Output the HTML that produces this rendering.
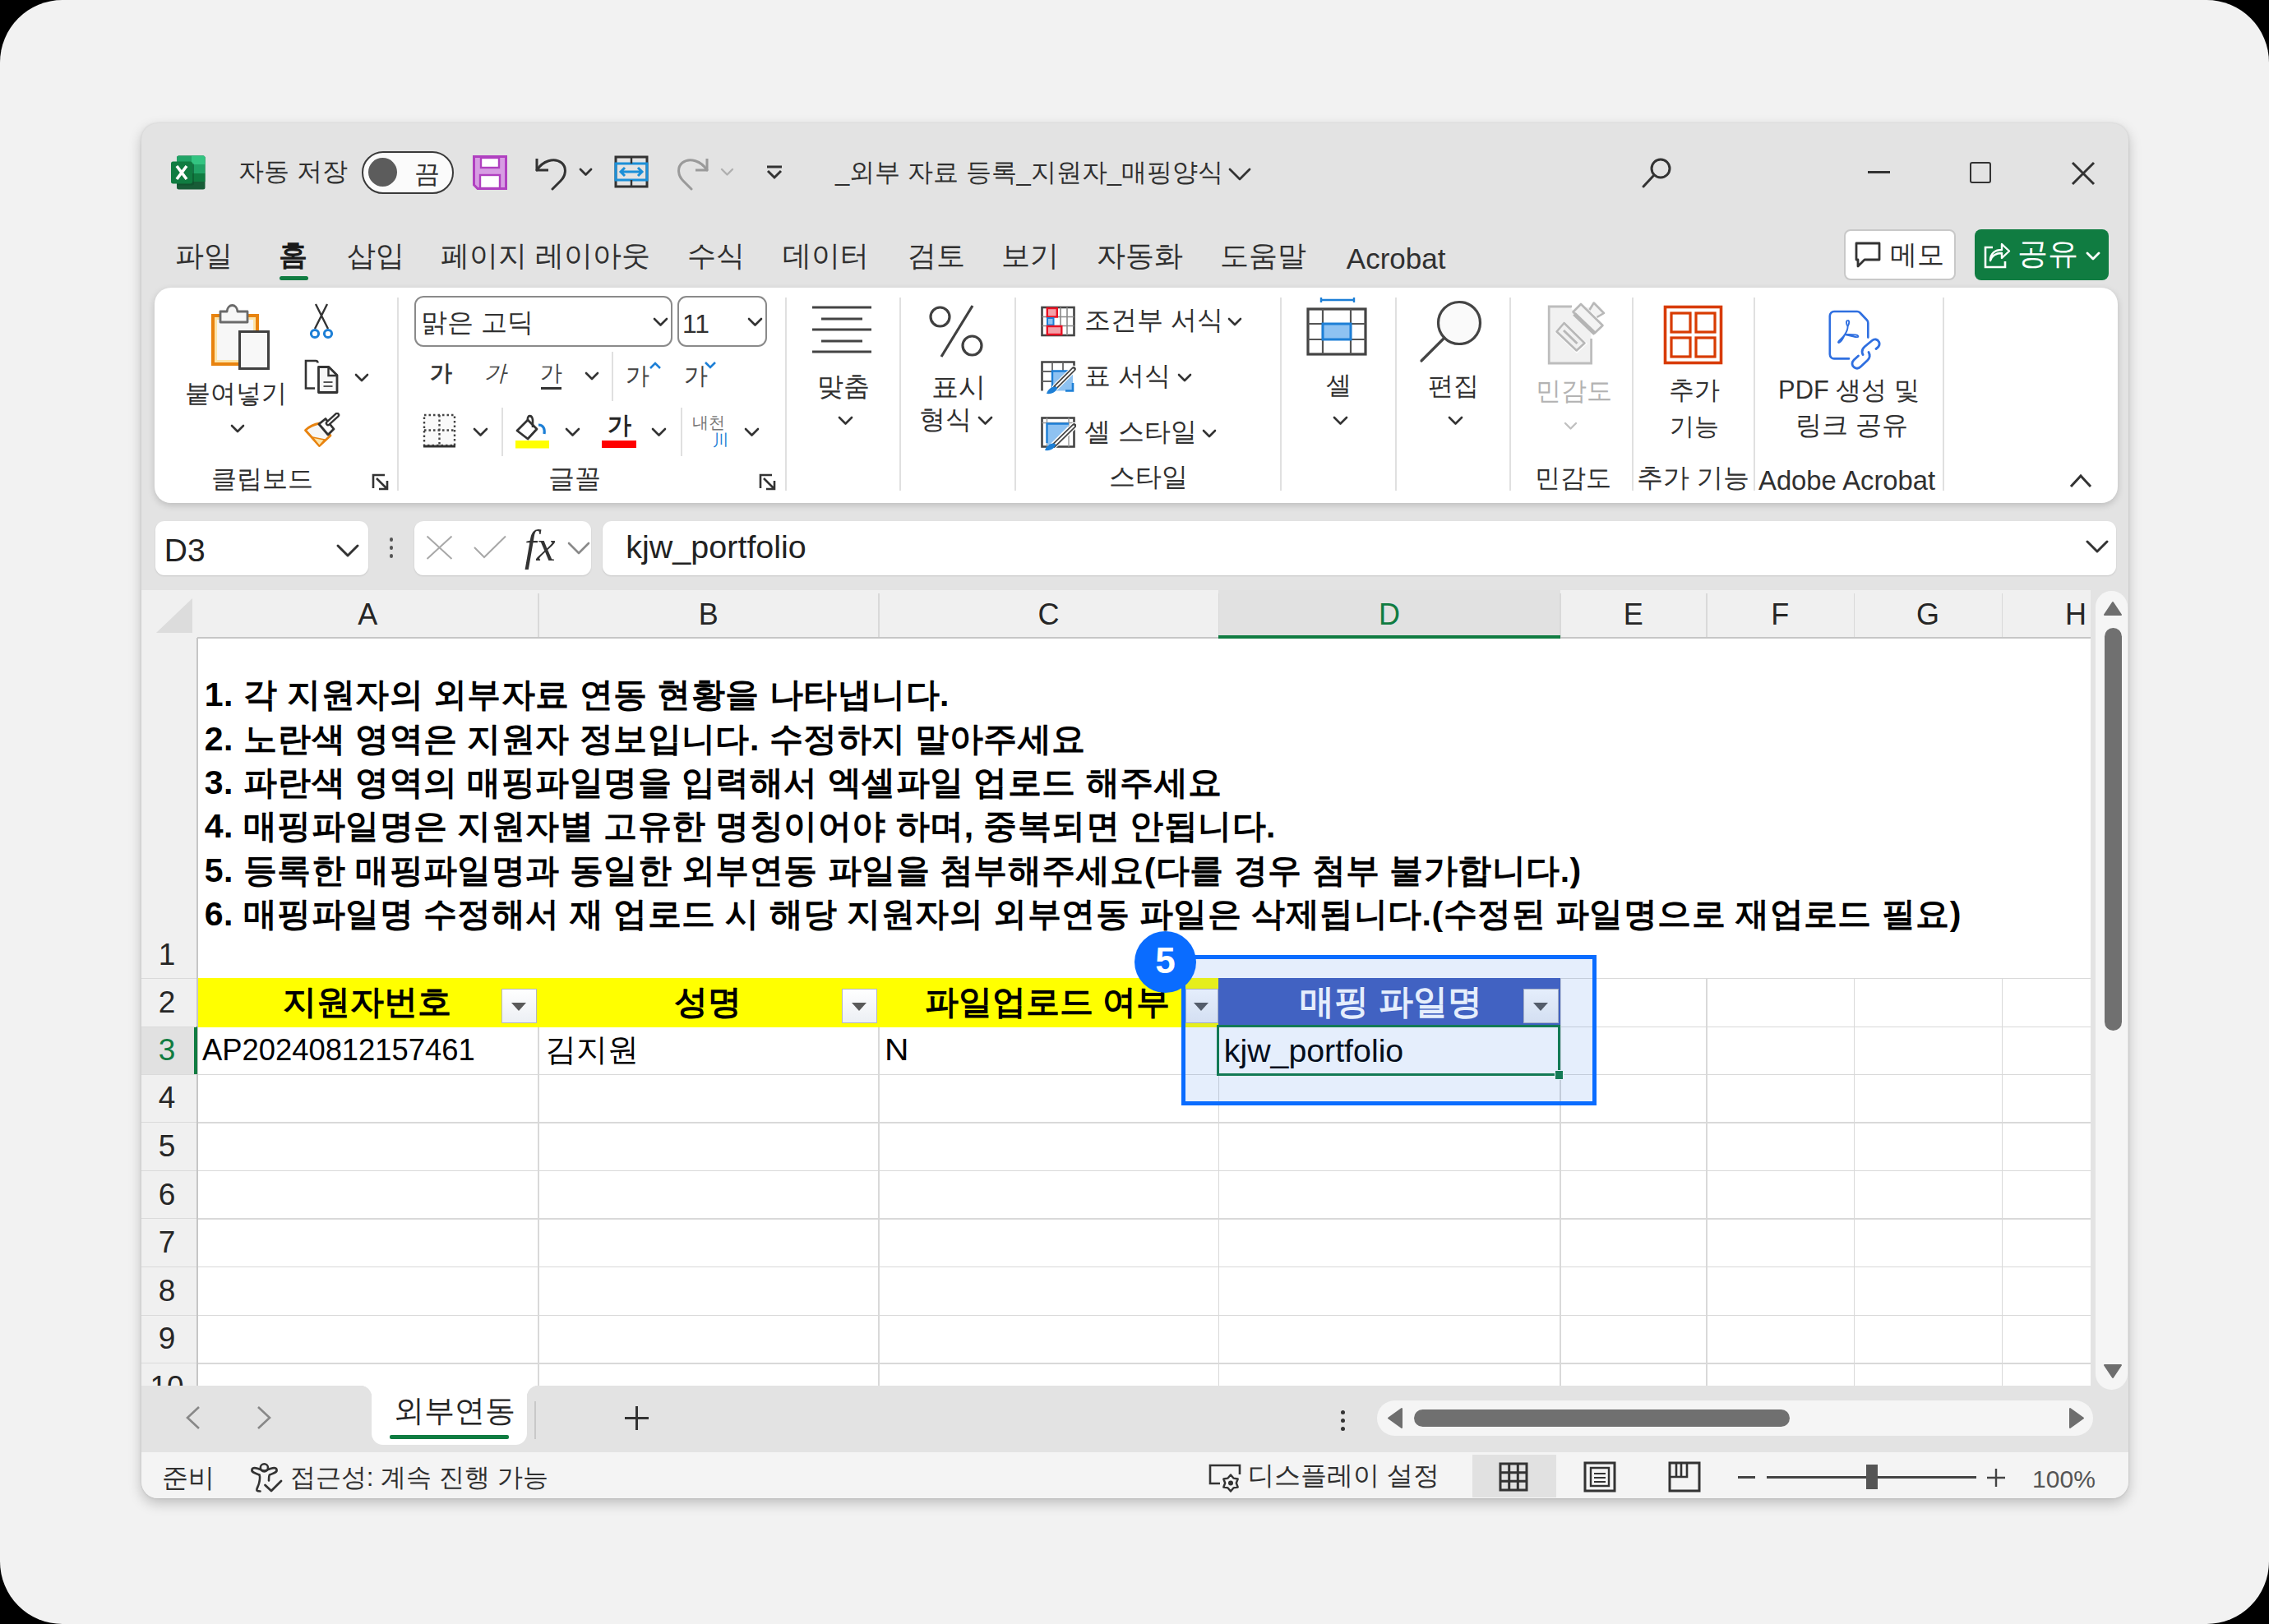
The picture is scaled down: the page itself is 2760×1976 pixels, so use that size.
<!DOCTYPE html>
<html><head><meta charset="utf-8"><style>
html,body{margin:0;padding:0;width:2760px;height:1976px;overflow:hidden;background:#000;}
#page{position:absolute;left:0;top:0;width:2760px;height:1976px;background:#f2f2f2;border-radius:76px;overflow:hidden;font-family:"Liberation Sans",sans-serif;}
.t{position:absolute;line-height:1;white-space:nowrap;font-family:"Liberation Sans",sans-serif;}
</style></head><body><div id="page">

<div style="position:absolute;left:172px;top:150px;width:2417px;height:1673px;background:#e3e3e3;border-radius:20px;box-shadow:0 6px 16px rgba(0,0,0,0.22),0 0 3px rgba(0,0,0,0.12);"></div>
<svg style="position:absolute;left:206px;top:188px" width="46" height="45" viewBox="0 0 46 45" fill="none">
<rect x="9" y="1.5" width="34.5" height="41" rx="2.5" fill="#185c37"/>
<path d="M11.5 1.5 H41 A2.5 2.5 0 0 1 43.5 4 V12.5 H9 V4 A2.5 2.5 0 0 1 11.5 1.5 Z" fill="#21a366"/>
<path d="M27 1.5 H41 A2.5 2.5 0 0 1 43.5 4 V12.5 H27 Z" fill="#33c481"/>
<rect x="9" y="12.5" width="34.5" height="10.5" fill="#21a366"/>
<rect x="9" y="23" width="34.5" height="10" fill="#107c41"/>
<rect x="9" y="10.5" width="21" height="27" rx="2.5" fill="#0b4f2a" opacity="0.55"/>
<rect x="2" y="8.5" width="26" height="27" rx="2.5" fill="#107c41"/>
<path d="M9 14 L21 30 M21 14 L9 30" stroke="#fff" stroke-width="3.6"/>
</svg>
<div class="t" style="left:290.1px;top:192.9px;font-size:31px;font-weight:normal;color:#303030;">자동 저장</div>
<div style="position:absolute;left:440px;top:184px;width:108px;height:48px;border:2px solid #3a3a3a;border-radius:26px;background:#fbfbfb;"></div>
<div style="position:absolute;left:448px;top:191.5px;width:35px;height:35px;border-radius:50%;background:#5c5c5c;"></div>
<div class="t" style="left:504.1px;top:195.9px;font-size:31px;font-weight:normal;color:#303030;">끔</div>
<svg style="position:absolute;left:575px;top:189px" width="42" height="42" viewBox="0 0 42 42" fill="none">
<path d="M1.5 1.5 H40.5 V40.5 H6 L1.5 36 Z" fill="#d79de3" stroke="#b040c0" stroke-width="3"/>
<rect x="10" y="3" width="22" height="12" fill="#fff" stroke="#b040c0" stroke-width="2.4"/>
<rect x="9" y="24" width="24" height="16" fill="#fff" stroke="#b040c0" stroke-width="2.4"/>
</svg>
<svg style="position:absolute;left:648px;top:188px" width="46" height="44" viewBox="0 0 46 44" fill="none">
<path d="M5 5 V19 H19" stroke="#333" stroke-width="3" fill="none" stroke-linejoin="round"/>
<path d="M5 19 C12 8 26 3 35 10 C42 16 40 26 34 32 L24 42" stroke="#333" stroke-width="3" fill="none" stroke-linecap="round"/>
</svg>
<svg style="position:absolute;left:702.5px;top:202.75px" width="19" height="12.5" viewBox="0 0 19 12.5" fill="none"><path d="M3 3 L9.5 9.5 L16 3" stroke="#333" stroke-width="2.8" fill="none" stroke-linecap="round" stroke-linejoin="round"/></svg>
<svg style="position:absolute;left:747px;top:189px" width="42" height="40" viewBox="0 0 42 40" fill="none">
<rect x="2" y="2" width="38" height="36" stroke="#333" stroke-width="3" fill="none"/>
<rect x="2" y="10" width="38" height="20" stroke="#1b8fd8" stroke-width="3" fill="none"/>
<line x1="21" y1="2" x2="21" y2="10" stroke="#333" stroke-width="2.4"/><line x1="21" y1="30" x2="21" y2="38" stroke="#333" stroke-width="2.4"/>
<path d="M8 20 H34 M13 15 L8 20 L13 25 M29 15 L34 20 L29 25" stroke="#1b8fd8" stroke-width="3" fill="none"/>
</svg>
<svg style="position:absolute;left:823px;top:188px" width="42" height="44" viewBox="0 0 42 44" fill="none">
<path d="M37 5 V19 H23" stroke="#9a9a9a" stroke-width="3" fill="none" stroke-linejoin="round"/>
<path d="M37 19 C30 8 16 3 7 10 C0 16 2 26 8 32 L18 42" stroke="#9a9a9a" stroke-width="3" fill="none" stroke-linecap="round"/>
</svg>
<svg style="position:absolute;left:874.5px;top:202.75px" width="19" height="12.5" viewBox="0 0 19 12.5" fill="none"><path d="M3 3 L9.5 9.5 L16 3" stroke="#b0b0b0" stroke-width="2.4" fill="none" stroke-linecap="round" stroke-linejoin="round"/></svg>
<svg style="position:absolute;left:931px;top:200px" width="22" height="20" viewBox="0 0 22 20" fill="none"><path d="M2 3 H20" stroke="#333" stroke-width="3"/><path d="M3 8 L11 16 L19 8" stroke="#333" stroke-width="3" fill="none"/></svg>
<div class="t" style="left:1016.1px;top:193.9px;font-size:31px;font-weight:normal;color:#303030;">_외부 자료 등록_지원자_매핑양식</div>
<svg style="position:absolute;left:1493.0px;top:202.5px" width="30" height="18.0" viewBox="0 0 30 18.0" fill="none"><path d="M3 3 L15.0 15.0 L27 3" stroke="#333" stroke-width="2.8" fill="none" stroke-linecap="round" stroke-linejoin="round"/></svg>
<svg style="position:absolute;left:1996px;top:190px" width="40" height="40" viewBox="0 0 40 40" fill="none"><circle cx="24" cy="15" r="11" stroke="#333" stroke-width="3"/><path d="M16 23 L3 37" stroke="#333" stroke-width="3" stroke-linecap="round"/></svg>
<div style="position:absolute;left:2272px;top:207.5px;width:27px;height:3.0px;background:#333;"></div>
<div style="position:absolute;left:2396px;top:197px;width:22px;height:22px;border:2.8px solid #333;border-radius:3px;"></div>
<svg style="position:absolute;left:2518px;top:195px" width="32" height="32" viewBox="0 0 32 32" fill="none"><path d="M3 3 L29 29 M29 3 L3 29" stroke="#333" stroke-width="3"/></svg>
<div class="t" style="left:212.9px;top:293.0px;font-size:35px;font-weight:normal;color:#303030;">파일</div>
<div class="t" style="left:421.6px;top:293.0px;font-size:35px;font-weight:normal;color:#303030;">삽입</div>
<div class="t" style="left:536.0px;top:293.0px;font-size:35px;font-weight:normal;color:#303030;">페이지 레이아웃</div>
<div class="t" style="left:836.0px;top:293.0px;font-size:35px;font-weight:normal;color:#303030;">수식</div>
<div class="t" style="left:952.4px;top:293.0px;font-size:35px;font-weight:normal;color:#303030;">데이터</div>
<div class="t" style="left:1103.5px;top:293.0px;font-size:35px;font-weight:normal;color:#303030;">검토</div>
<div class="t" style="left:1218.0px;top:293.0px;font-size:35px;font-weight:normal;color:#303030;">보기</div>
<div class="t" style="left:1333.8px;top:293.0px;font-size:35px;font-weight:normal;color:#303030;">자동화</div>
<div class="t" style="left:1484.4px;top:293.0px;font-size:35px;font-weight:normal;color:#303030;">도움말</div>
<div class="t" style="left:338.9px;top:291.5px;font-size:35px;font-weight:bold;color:#1a1a1a;">홈</div>
<div style="position:absolute;left:340px;top:336px;width:35px;height:4.5px;background:#107c41;border-radius:3px;"></div>
<div class="t" style="left:1637.8px;top:297.1px;font-size:35px;font-weight:normal;color:#303030;">Acrobat</div>
<div style="position:absolute;left:2243px;top:279px;width:132px;height:58px;border:2px solid #c8c8c8;border-radius:8px;background:#fff;"></div>
<svg style="position:absolute;left:2254px;top:292px" width="36" height="36" viewBox="0 0 36 36" fill="none"><path d="M4 4 H32 V24 H14 L6 32 V24 H4 Z" stroke="#333" stroke-width="2.8" fill="none" stroke-linejoin="round"/></svg>
<div class="t" style="left:2299.4px;top:292.7px;font-size:33.4px;font-weight:normal;color:#303030;">메모</div>
<div style="position:absolute;left:2402px;top:279px;width:163px;height:62px;border-radius:8px;background:#107c41;"></div>
<svg style="position:absolute;left:2411px;top:293px" width="36" height="36" viewBox="0 0 36 36" fill="none"><path d="M13 8 H4 V32 H28 V25" stroke="#fff" stroke-width="2.6" fill="none"/><path d="M10 24 C10 15 16 11 24 11 V4 L33 12.5 L24 21 V15 C17 15 12 18 10 24 Z" stroke="#fff" stroke-width="2.4" fill="none" stroke-linejoin="round"/></svg>
<div class="t" style="left:2453.9px;top:291.3px;font-size:36.6px;font-weight:normal;color:#fff;">공유</div>
<svg style="position:absolute;left:2536.0px;top:304.5px" width="20" height="13.0" viewBox="0 0 20 13.0" fill="none"><path d="M3 3 L10.0 10.0 L17 3" stroke="#fff" stroke-width="2.8" fill="none" stroke-linecap="round" stroke-linejoin="round"/></svg>
<div style="position:absolute;left:187.5px;top:350px;width:2388.5px;height:262px;background:#fff;border-radius:20px;box-shadow:0 3px 9px rgba(0,0,0,0.17);"></div>
<div style="position:absolute;left:483px;top:362px;width:2px;height:235px;background:#e0e0e0;"></div>
<div style="position:absolute;left:955px;top:362px;width:2px;height:235px;background:#e0e0e0;"></div>
<div style="position:absolute;left:1094.4px;top:362px;width:2.0px;height:235px;background:#e0e0e0;"></div>
<div style="position:absolute;left:1233.7px;top:362px;width:2.0px;height:235px;background:#e0e0e0;"></div>
<div style="position:absolute;left:1557px;top:362px;width:2px;height:235px;background:#e0e0e0;"></div>
<div style="position:absolute;left:1697px;top:362px;width:2px;height:235px;background:#e0e0e0;"></div>
<div style="position:absolute;left:1836.4px;top:362px;width:2.0px;height:235px;background:#e0e0e0;"></div>
<div style="position:absolute;left:1984.8px;top:362px;width:2.0px;height:235px;background:#e0e0e0;"></div>
<div style="position:absolute;left:2133px;top:362px;width:2px;height:235px;background:#e0e0e0;"></div>
<div style="position:absolute;left:2363px;top:362px;width:2px;height:235px;background:#e0e0e0;"></div>
<svg style="position:absolute;left:255px;top:368px" width="76" height="84" viewBox="0 0 76 84" fill="none">
<rect x="4" y="16" width="54" height="59" fill="#f6f6f6" stroke="#e8830f" stroke-width="4"/>
<rect x="7.5" y="19.5" width="47" height="52" fill="none" stroke="#fde4a8" stroke-width="3"/>
<rect x="10" y="22" width="42" height="47" fill="#f7f7f7"/>
<path d="M13 11 H21 C22 1 33 1 34 11 H46 V24 H13 Z" fill="#f7f7f7" stroke="#6a6a6a" stroke-width="2.8" stroke-linejoin="round"/>
<rect x="36.5" y="35.5" width="35" height="45" fill="#f8f8f8" stroke="#404040" stroke-width="3"/>
</svg>
<div class="t" style="left:224.6px;top:462.9px;font-size:31.2px;font-weight:normal;color:#303030;">붙여넣기</div>
<svg style="position:absolute;left:279.0px;top:514.5px" width="20" height="13.0" viewBox="0 0 20 13.0" fill="none"><path d="M3 3 L10.0 10.0 L17 3" stroke="#333" stroke-width="2.6" fill="none" stroke-linecap="round" stroke-linejoin="round"/></svg>
<svg style="position:absolute;left:374px;top:368px" width="34" height="46" viewBox="0 0 34 46" fill="none">
<path d="M10 2 L25 32 M24 2 L9 32" stroke="#333" stroke-width="2.4"/>
<circle cx="9" cy="38" r="4.6" stroke="#1d7fd6" stroke-width="3" fill="#fff"/><circle cx="25" cy="38" r="4.6" stroke="#1d7fd6" stroke-width="3" fill="#fff"/>
</svg>
<svg style="position:absolute;left:369px;top:436px" width="46" height="46" viewBox="0 0 46 46" fill="none">
<path d="M14 36.5 H3 V3 H15 C16.5 3 17.5 4 17.5 5.5" stroke="#333" stroke-width="2.6" fill="none"/>
<path d="M18.5 10.5 H31 L41 20.5 V41.5 H18.5 Z" fill="#f7f7f7" stroke="#333" stroke-width="2.8" stroke-linejoin="round"/>
<path d="M30.5 10.5 V21 H41" stroke="#333" stroke-width="2.4" fill="none"/>
<path d="M24.5 29 H35.5 M24.5 34 H35.5" stroke="#555" stroke-width="2"/>
</svg>
<svg style="position:absolute;left:430.0px;top:452.5px" width="20" height="13.0" viewBox="0 0 20 13.0" fill="none"><path d="M3 3 L10.0 10.0 L17 3" stroke="#333" stroke-width="2.6" fill="none" stroke-linecap="round" stroke-linejoin="round"/></svg>
<svg style="position:absolute;left:369px;top:502px" width="46" height="44" viewBox="0 0 46 44" fill="none">
<path d="M2.5 21.5 C8 16 14 14 20 13 L33 28 L19.5 40.5 Z" fill="#f7f7f7" stroke="#e8830f" stroke-width="2.8" stroke-linejoin="round"/>
<path d="M11 30 L26 33 L19.5 40.5 Z" fill="#fde4a8" stroke="#e8830f" stroke-width="1.6" stroke-linejoin="round"/>
<path d="M19 14 L27 7.5 L37 20 L30 27 Z" fill="#fff" stroke="#333" stroke-width="2.8" stroke-linejoin="round"/>
<path d="M30 13 L41 3" stroke="#333" stroke-width="6.5" stroke-linecap="round"/>
<path d="M30 13 L41 3" stroke="#fff" stroke-width="1.8" stroke-linecap="round"/>
</svg>
<div class="t" style="left:257.1px;top:566.9px;font-size:31.1px;font-weight:normal;color:#303030;">클립보드</div>
<svg style="position:absolute;left:452px;top:576px" width="22" height="22" viewBox="0 0 22 22" fill="none"><path d="M2 18 V2 H16" stroke="#333" stroke-width="2.6" fill="none"/><path d="M6 6 L19 19 M9 19 H19 V9" stroke="#333" stroke-width="2.6" fill="none"/></svg>
<div style="position:absolute;left:504px;top:360px;width:310px;height:58px;border:2px solid #8a8a8a;border-radius:11px;background:#fff;"></div>
<div class="t" style="left:512.0px;top:375.8px;font-size:32.1px;font-weight:normal;color:#303030;">맑은 고딕</div>
<svg style="position:absolute;left:793.0px;top:385.25px" width="21" height="13.5" viewBox="0 0 21 13.5" fill="none"><path d="M3 3 L10.5 10.5 L18 3" stroke="#333" stroke-width="2.6" fill="none" stroke-linecap="round" stroke-linejoin="round"/></svg>
<div style="position:absolute;left:824px;top:360px;width:105px;height:58px;border:2px solid #8a8a8a;border-radius:11px;background:#fff;"></div>
<div class="t" style="left:830.0px;top:379.2px;font-size:31.9px;font-weight:normal;color:#303030;">11</div>
<svg style="position:absolute;left:908.0px;top:385.25px" width="21" height="13.5" viewBox="0 0 21 13.5" fill="none"><path d="M3 3 L10.5 10.5 L18 3" stroke="#333" stroke-width="2.6" fill="none" stroke-linecap="round" stroke-linejoin="round"/></svg>
<div class="t" style="left:523.2px;top:441.3px;font-size:27px;font-weight:bold;color:#333;">가</div>
<div class="t" style="left:589.2px;top:441.3px;font-size:27px;font-weight:normal;color:#444;"><i>가</i></div>
<div class="t" style="left:656.9px;top:441.3px;font-size:27px;font-weight:normal;color:#444;">가</div>
<div style="position:absolute;left:657.7px;top:471px;width:25.299999999999955px;height:2.5px;background:#333;"></div>
<svg style="position:absolute;left:709.5px;top:450.5px" width="20" height="13.0" viewBox="0 0 20 13.0" fill="none"><path d="M3 3 L10.0 10.0 L17 3" stroke="#333" stroke-width="2.6" fill="none" stroke-linecap="round" stroke-linejoin="round"/></svg>
<div style="position:absolute;left:744px;top:428px;width:2px;height:60px;background:#e0e0e0;"></div>
<div class="t" style="left:761.1px;top:443.1px;font-size:29px;font-weight:normal;color:#444;">가</div>
<svg style="position:absolute;left:789px;top:439px" width="16" height="11" viewBox="0 0 16 11" fill="none"><path d="M2 9 L8 3 L14 9" stroke="#1d7fd6" stroke-width="2.6" fill="none"/></svg>
<div class="t" style="left:832.1px;top:443.1px;font-size:29px;font-weight:normal;color:#444;">가</div>
<svg style="position:absolute;left:856px;top:439px" width="16" height="11" viewBox="0 0 16 11" fill="none"><path d="M2 2 L8 8 L14 2" stroke="#1d7fd6" stroke-width="2.6" fill="none"/></svg>
<svg style="position:absolute;left:513px;top:502px" width="44" height="46" viewBox="0 0 44 46" fill="none">
<rect x="3" y="3" width="37" height="37" stroke="#444" stroke-width="2.4" stroke-dasharray="2.5 3" fill="#fafafa"/>
<path d="M21.5 3 V40 M3 21.5 H40" stroke="#444" stroke-width="2.4" stroke-dasharray="2.5 3"/>
<path d="M2 41 H41" stroke="#333" stroke-width="3.2"/>
</svg>
<svg style="position:absolute;left:574.0px;top:519.25px" width="21" height="13.5" viewBox="0 0 21 13.5" fill="none"><path d="M3 3 L10.5 10.5 L18 3" stroke="#333" stroke-width="2.6" fill="none" stroke-linecap="round" stroke-linejoin="round"/></svg>
<div style="position:absolute;left:610px;top:495.5px;width:2px;height:59.5px;background:#e0e0e0;"></div>
<svg style="position:absolute;left:625px;top:502px" width="46" height="46" viewBox="0 0 46 46" fill="none">
<path d="M4 22 L17 9 L28 20 L17 32 Z" fill="#fff" stroke="#333" stroke-width="2.8" stroke-linejoin="round"/>
<path d="M17 9 C16 3 22 2 23 9 V18" stroke="#333" stroke-width="2.6" fill="none"/>
<path d="M30 15 C36 15 38 20 37 26" stroke="#1d7fd6" stroke-width="3.2" fill="none"/>
<rect x="2" y="34" width="41" height="9.5" fill="#ffff00"/>
</svg>
<svg style="position:absolute;left:686.0px;top:519.25px" width="21" height="13.5" viewBox="0 0 21 13.5" fill="none"><path d="M3 3 L10.5 10.5 L18 3" stroke="#333" stroke-width="2.6" fill="none" stroke-linecap="round" stroke-linejoin="round"/></svg>
<div class="t" style="left:739.1px;top:503.1px;font-size:29px;font-weight:bold;color:#262626;">가</div>
<div style="position:absolute;left:731.7px;top:535.7px;width:42.299999999999955px;height:9.299999999999955px;background:#ff0000;"></div>
<svg style="position:absolute;left:791.0px;top:519.25px" width="21" height="13.5" viewBox="0 0 21 13.5" fill="none"><path d="M3 3 L10.5 10.5 L18 3" stroke="#333" stroke-width="2.6" fill="none" stroke-linecap="round" stroke-linejoin="round"/></svg>
<div style="position:absolute;left:828px;top:495.5px;width:2px;height:59.5px;background:#e0e0e0;"></div>
<div class="t" style="left:842.4px;top:504.0px;font-size:20px;font-weight:normal;color:#777;">내천</div>
<div class="t" style="left:867.4px;top:526.1px;font-size:19px;font-weight:normal;color:#1d7fd6;">川</div>
<svg style="position:absolute;left:903.5px;top:519.25px" width="21" height="13.5" viewBox="0 0 21 13.5" fill="none"><path d="M3 3 L10.5 10.5 L18 3" stroke="#333" stroke-width="2.6" fill="none" stroke-linecap="round" stroke-linejoin="round"/></svg>
<div class="t" style="left:667.0px;top:566.3px;font-size:32px;font-weight:normal;color:#303030;">글꼴</div>
<svg style="position:absolute;left:923px;top:576px" width="22" height="22" viewBox="0 0 22 22" fill="none"><path d="M2 18 V2 H16" stroke="#333" stroke-width="2.6" fill="none"/><path d="M6 6 L19 19 M9 19 H19 V9" stroke="#333" stroke-width="2.6" fill="none"/></svg>
<svg style="position:absolute;left:986px;top:372px" width="76" height="60" viewBox="0 0 76 60" fill="none"><path d="M2 2 H74 M13 16 H63 M2 29 H74 M13 43 H63 M2 56 H74" stroke="#444" stroke-width="3.2"/></svg>
<div class="t" style="left:993.6px;top:454.3px;font-size:32.1px;font-weight:normal;color:#303030;">맞춤</div>
<svg style="position:absolute;left:1017.5px;top:505.25px" width="21" height="13.5" viewBox="0 0 21 13.5" fill="none"><path d="M3 3 L10.5 10.5 L18 3" stroke="#333" stroke-width="2.6" fill="none" stroke-linecap="round" stroke-linejoin="round"/></svg>
<svg style="position:absolute;left:1128px;top:369px" width="70" height="68" viewBox="0 0 70 68" fill="none"><circle cx="15.5" cy="16.5" r="11.5" stroke="#404040" stroke-width="3.2"/><circle cx="54.5" cy="51.5" r="11.5" stroke="#404040" stroke-width="3.2"/><path d="M55 3 L17 65" stroke="#404040" stroke-width="3.2"/></svg>
<div class="t" style="left:1133.0px;top:454.2px;font-size:33px;font-weight:normal;color:#303030;">표시</div>
<div class="t" style="left:1118.1px;top:495.4px;font-size:31.5px;font-weight:normal;color:#303030;">형식</div>
<svg style="position:absolute;left:1188.0px;top:505.25px" width="21" height="13.5" viewBox="0 0 21 13.5" fill="none"><path d="M3 3 L10.5 10.5 L18 3" stroke="#333" stroke-width="2.6" fill="none" stroke-linecap="round" stroke-linejoin="round"/></svg>
<svg style="position:absolute;left:1265px;top:371px" width="44" height="40" viewBox="0 0 44 40" fill="none">
<rect x="2.5" y="3" width="39" height="34" fill="#fff" stroke="#444" stroke-width="2.6"/>
<path d="M9 3 V37 M25 3 V37 M33 3 V37 M2.5 14.5 H41.5 M2.5 25.5 H41.5" stroke="#8a8a8a" stroke-width="1.6"/>
<rect x="8.8" y="4" width="12" height="10.5" fill="#f4a0a8" stroke="#e81123" stroke-width="2.4"/>
<rect x="9" y="16" width="7.5" height="8.5" fill="#8ec2f2" stroke="#1d7fd6" stroke-width="2"/>
<rect x="8.8" y="26" width="17.5" height="10" fill="#f4a0a8" stroke="#e81123" stroke-width="2.4"/>
</svg>
<div class="t" style="left:1319.1px;top:373.9px;font-size:31.5px;font-weight:normal;color:#303030;">조건부 서식</div>
<svg style="position:absolute;left:1492.0px;top:384.5px" width="20" height="13.0" viewBox="0 0 20 13.0" fill="none"><path d="M3 3 L10.0 10.0 L17 3" stroke="#333" stroke-width="2.6" fill="none" stroke-linecap="round" stroke-linejoin="round"/></svg>
<svg style="position:absolute;left:1265px;top:438px" width="44" height="44" viewBox="0 0 44 44" fill="none">
<path d="M2.5 37.5 V2.5 H41.5 V12" stroke="#444" stroke-width="2.6" fill="none"/>
<path d="M15 2.5 V13 M28 2.5 V13 M2.5 14 H15 M2.5 26 H15" stroke="#666" stroke-width="1.8"/>
<path d="M15 37.5 V13.5 H40 V37.5 Z" fill="#8ec2f2"/>
<path d="M15 37 V13.5 H40" stroke="#1d7fd6" stroke-width="2.4" fill="none"/>
<path d="M40 28 V37.5 H31" stroke="#1d7fd6" stroke-width="2.6" fill="none"/>
<path d="M41 11 L19 33" stroke="#fff" stroke-width="8" stroke-linecap="round"/>
<path d="M41 11 L19 33" stroke="#444" stroke-width="5.5" stroke-linecap="round"/>
<path d="M40.5 11.5 L20 32" stroke="#fff" stroke-width="2" stroke-linecap="round"/>
<path d="M8 41 C10 35 15 31 21 33 C21 38 15 42 8 41 Z" fill="#1d7fd6"/>
</svg>
<div class="t" style="left:1319.1px;top:441.8px;font-size:31.6px;font-weight:normal;color:#303030;">표 서식</div>
<svg style="position:absolute;left:1430.5px;top:452.5px" width="20" height="13.0" viewBox="0 0 20 13.0" fill="none"><path d="M3 3 L10.0 10.0 L17 3" stroke="#333" stroke-width="2.6" fill="none" stroke-linecap="round" stroke-linejoin="round"/></svg>
<svg style="position:absolute;left:1265px;top:506px" width="44" height="44" viewBox="0 0 44 44" fill="none">
<rect x="2.5" y="2.5" width="39" height="35" stroke="#444" stroke-width="2.6" fill="#fff"/>
<path d="M8.5 2.5 V37.5 M35 2.5 V37.5 M2.5 8.5 H41.5" stroke="#9a9a9a" stroke-width="1.4"/>
<path d="M8.5 9 H35 V12 L12 35 H8.5 Z" fill="#8ec2f2"/>
<path d="M8.5 33 V9.5 H35" stroke="#1d7fd6" stroke-width="2.4" fill="none"/>
<path d="M41.5 12 L17 36" stroke="#fff" stroke-width="8" stroke-linecap="round"/>
<path d="M41.5 12 L17 36" stroke="#444" stroke-width="5.5" stroke-linecap="round"/>
<path d="M41 12.5 L18 35" stroke="#fff" stroke-width="2" stroke-linecap="round"/>
<path d="M6 42 C8 36 13 32 19 34 C19 39 13 43 6 42 Z" fill="#1d7fd6"/>
</svg>
<div class="t" style="left:1319.1px;top:509.9px;font-size:31.5px;font-weight:normal;color:#303030;">셀 스타일</div>
<svg style="position:absolute;left:1460.5px;top:520.5px" width="20" height="13.0" viewBox="0 0 20 13.0" fill="none"><path d="M3 3 L10.0 10.0 L17 3" stroke="#333" stroke-width="2.6" fill="none" stroke-linecap="round" stroke-linejoin="round"/></svg>
<div class="t" style="left:1349.1px;top:564.8px;font-size:31.6px;font-weight:normal;color:#303030;">스타일</div>
<svg style="position:absolute;left:1588px;top:362px" width="76" height="72" viewBox="0 0 76 72" fill="none">
<path d="M19 3 H59 M19 0 V6 M59 0 V6" stroke="#1d7fd6" stroke-width="2.4"/>
<rect x="3" y="14" width="70" height="55" fill="#fff" stroke="#444" stroke-width="3.2"/>
<path d="M21 14 V69 M55 14 V69 M3 32 H73 M3 51 H73" stroke="#555" stroke-width="2.2"/>
<rect x="21" y="32" width="34" height="19" fill="#8ec2f2" stroke="#1d7fd6" stroke-width="3"/>
</svg>
<div class="t" style="left:1612.9px;top:454.4px;font-size:30.8px;font-weight:normal;color:#303030;">셀</div>
<svg style="position:absolute;left:1620.0px;top:505.25px" width="21" height="13.5" viewBox="0 0 21 13.5" fill="none"><path d="M3 3 L10.5 10.5 L18 3" stroke="#333" stroke-width="2.6" fill="none" stroke-linecap="round" stroke-linejoin="round"/></svg>
<svg style="position:absolute;left:1725px;top:364px" width="80" height="80" viewBox="0 0 80 80" fill="none"><circle cx="50" cy="29" r="25.5" stroke="#444" stroke-width="3.2" fill="#fafafa"/><path d="M32 47 L4 75" stroke="#444" stroke-width="3.2" stroke-linecap="round"/></svg>
<div class="t" style="left:1737.1px;top:454.4px;font-size:31.1px;font-weight:normal;color:#303030;">편집</div>
<svg style="position:absolute;left:1760.0px;top:505.25px" width="21" height="13.5" viewBox="0 0 21 13.5" fill="none"><path d="M3 3 L10.5 10.5 L18 3" stroke="#333" stroke-width="2.6" fill="none" stroke-linecap="round" stroke-linejoin="round"/></svg>
<svg style="position:absolute;left:1881px;top:365px" width="72" height="82" viewBox="0 0 72 82" fill="none">
<rect x="4.5" y="9" width="50" height="67.5" fill="#f1f1f1"/>
<path d="M31 8 H3.2 V77 H54.6 V47" stroke="#bdbdbd" stroke-width="2.8" fill="none"/>
<path d="M30 10 L40 1 L73 34 L64 44 Z" fill="#fff"/>
<path d="M10 39 L22 26 L50 53 L37 65 Z" fill="#fff"/>
<path d="M12.5 38.5 L21.6 28 L46.5 52.5 L36.7 61.5 Z" fill="#f1f1f1" stroke="#b8b8b8" stroke-width="2.6" stroke-linejoin="round"/>
<path d="M21 37 L37.5 53" stroke="#b8b8b8" stroke-width="3"/>
<path d="M32.5 14.5 L42 5 L68.5 31 L58.5 40.5 Z" fill="#f3f3f3" stroke="#b8b8b8" stroke-width="2.6" stroke-linejoin="round"/>
<path d="M34 17 L59 41" stroke="#b4b4b4" stroke-width="5"/>
<path d="M52.5 12 L57.7 3.5 L70 16 L61.5 21" fill="#f3f3f3" stroke="#b8b8b8" stroke-width="2.6" stroke-linejoin="round"/>
</svg>
<div class="t" style="left:1868.1px;top:459.9px;font-size:30.6px;font-weight:normal;color:#b3b3b3;">민감도</div>
<svg style="position:absolute;left:1900.5px;top:511.75px" width="19" height="12.5" viewBox="0 0 19 12.5" fill="none"><path d="M3 3 L9.5 9.5 L16 3" stroke="#c0c0c0" stroke-width="2.4" fill="none" stroke-linecap="round" stroke-linejoin="round"/></svg>
<div class="t" style="left:1867.1px;top:566.4px;font-size:30.6px;font-weight:normal;color:#303030;">민감도</div>
<svg style="position:absolute;left:2023px;top:371px" width="74" height="74" viewBox="0 0 74 74" fill="none"><rect x="2.5" y="2.5" width="68" height="68" stroke="#d83b01" stroke-width="3.6" fill="#fff"/>
<rect x="10" y="10" width="23" height="23" stroke="#d83b01" stroke-width="3.2"/><rect x="40" y="10" width="23" height="23" stroke="#d83b01" stroke-width="3.2"/>
<rect x="10" y="40" width="23" height="23" stroke="#d83b01" stroke-width="3.2"/><rect x="40" y="40" width="23" height="23" stroke="#d83b01" stroke-width="3.2"/></svg>
<div class="t" style="left:2029.5px;top:459.9px;font-size:30.7px;font-weight:normal;color:#303030;">추가</div>
<div class="t" style="left:2031.1px;top:503.7px;font-size:30.1px;font-weight:normal;color:#303030;">기능</div>
<div class="t" style="left:1991.1px;top:566.3px;font-size:31.6px;font-weight:normal;color:#303030;">추가 기능</div>
<svg style="position:absolute;left:2222px;top:375px" width="70" height="78" viewBox="0 0 70 78" fill="none">
<path d="M27 61.4 H9 C6 61.4 3.8 59 3.8 56 V9.5 C3.8 6.5 6 4 9 4 H37 C38.5 4 39.5 4.5 40.5 5.5 L49 14.5 C50 15.5 50.3 16.5 50.3 18 V35.6" stroke="#2f6fe0" stroke-width="2.6" fill="none" stroke-linecap="round"/>
<path d="M25.8 15 C23 15 24 20 25.5 22 C26 26 24 29 22 32 C19 37 14 39.5 14 41.5 C15 43 18 41 22 32 L33 34.5 C36 35.5 39.5 35.5 38 33.5 C36.5 31.5 31 32 22 32" stroke="#2f6fe0" stroke-width="1.9" fill="none" stroke-linejoin="round"/>
<path d="M25.8 15 C28 15 27.5 19 25.5 22" stroke="#2f6fe0" stroke-width="1.9" fill="none"/>
<path d="M44 56.5 C42 52.5 43 49.5 46.5 46.5 L55 39.5 C58 37 62 37.5 63.5 41 C65 44 63.5 47 60 49.5" stroke="#2f6fe0" stroke-width="2.8" fill="none" stroke-linecap="round"/>
<path d="M38.5 58 L33 63 C30 66 30.5 70 33.5 72 C36.5 74 39.5 73 41.5 71 L49.5 63.5 C52.5 60.5 53 57 51 53.5" stroke="#2f6fe0" stroke-width="2.8" fill="none" stroke-linecap="round"/>
</svg>
<div class="t" style="left:2163.1px;top:459.9px;font-size:30.8px;font-weight:normal;color:#303030;">PDF 생성 및</div>
<div class="t" style="left:2184.1px;top:501.9px;font-size:31.5px;font-weight:normal;color:#303030;">링크 공유</div>
<div class="t" style="left:2139.0px;top:569.1px;font-size:32.8px;font-weight:normal;color:#303030;">Adobe Acrobat</div>
<svg style="position:absolute;left:2516px;top:574px" width="30" height="22" viewBox="0 0 30 22" fill="none"><path d="M3 18 L15 5 L27 18" stroke="#333" stroke-width="3" fill="none"/></svg>
<div style="position:absolute;left:189px;top:634px;width:259px;height:66px;background:#fff;border-radius:11px;box-shadow:0 1px 2px rgba(0,0,0,0.12);"></div>
<div class="t" style="left:199.8px;top:649.6px;font-size:39px;font-weight:normal;color:#222;">D3</div>
<svg style="position:absolute;left:408.0px;top:661.0px" width="30" height="18.0" viewBox="0 0 30 18.0" fill="none"><path d="M3 3 L15.0 15.0 L27 3" stroke="#333" stroke-width="3" fill="none" stroke-linecap="round" stroke-linejoin="round"/></svg>
<div style="position:absolute;left:473.5px;top:653.5px;width:4.5px;height:5.0px;background:#555;border-radius:50%;"></div>
<div style="position:absolute;left:473.5px;top:663.5px;width:4.5px;height:5.0px;background:#555;border-radius:50%;"></div>
<div style="position:absolute;left:473.5px;top:673.5px;width:4.5px;height:5.0px;background:#555;border-radius:50%;"></div>
<div style="position:absolute;left:503.6px;top:634px;width:215.4px;height:66px;background:#fff;border-radius:11px;box-shadow:0 1px 2px rgba(0,0,0,0.12);"></div>
<svg style="position:absolute;left:517px;top:650px" width="35" height="33" viewBox="0 0 35 33" fill="none"><path d="M2.5 2.5 L32.5 30 M32.5 2.5 L2.5 30" stroke="#a8a8a8" stroke-width="2"/></svg>
<svg style="position:absolute;left:574px;top:650px" width="44" height="33" viewBox="0 0 44 33" fill="none"><path d="M3 16 L15 28 L41 2.5" stroke="#a8a8a8" stroke-width="2" fill="none"/></svg>
<div class="t" style="left:638px;top:639px;font-size:52px;color:#333;font-family:&quot;Liberation Serif&quot;,serif;font-style:italic;">fx</div>
<svg style="position:absolute;left:689.0px;top:658.0px" width="30" height="18.0" viewBox="0 0 30 18.0" fill="none"><path d="M3 3 L15.0 15.0 L27 3" stroke="#8a8a8a" stroke-width="2.6" fill="none" stroke-linecap="round" stroke-linejoin="round"/></svg>
<div style="position:absolute;left:733px;top:634px;width:1841px;height:66px;background:#fff;border-radius:11px;box-shadow:0 1px 2px rgba(0,0,0,0.12);"></div>
<div class="t" style="left:761.3px;top:646.1px;font-size:39.5px;font-weight:normal;color:#222;">kjw_portfolio</div>
<svg style="position:absolute;left:2536.0px;top:656.0px" width="30" height="18.0" viewBox="0 0 30 18.0" fill="none"><path d="M3 3 L15.0 15.0 L27 3" stroke="#333" stroke-width="3" fill="none" stroke-linecap="round" stroke-linejoin="round"/></svg>
<div style="position:absolute;left:172px;top:718px;width:2371px;height:58px;background:#f0f0f0;"></div>
<svg style="position:absolute;left:188px;top:726px" width="48" height="46" viewBox="0 0 48 46" fill="none"><path d="M46 2 V44 H2 Z" fill="#dcdcdc"/></svg>
<div style="position:absolute;left:1482.4px;top:718px;width:415.29999999999995px;height:58px;background:#e1e1e1;"></div>
<div class="t" style="left:407.3px;width:80px;text-align:center;top:729.6px;font-size:36px;color:#262626;">A</div>
<div class="t" style="left:821.7px;width:80px;text-align:center;top:729.6px;font-size:36px;color:#262626;">B</div>
<div class="t" style="left:1235.6px;width:80px;text-align:center;top:729.6px;font-size:36px;color:#262626;">C</div>
<div class="t" style="left:1650.0500000000002px;width:80px;text-align:center;top:729.6px;font-size:36px;color:#107c41;">D</div>
<div class="t" style="left:1946.6999999999998px;width:80px;text-align:center;top:729.6px;font-size:36px;color:#262626;">E</div>
<div class="t" style="left:2125.35px;width:80px;text-align:center;top:729.6px;font-size:36px;color:#262626;">F</div>
<div class="t" style="left:2305.0px;width:80px;text-align:center;top:729.6px;font-size:36px;color:#262626;">G</div>
<div class="t" style="left:2485px;width:80px;text-align:center;top:729.6px;font-size:36px;color:#262626;">H</div>
<div style="position:absolute;left:654.1px;top:722px;width:1.5px;height:54px;background:#d9d9d9;"></div>
<div style="position:absolute;left:1068.3px;top:722px;width:1.5px;height:54px;background:#d9d9d9;"></div>
<div style="position:absolute;left:1481.9px;top:722px;width:1.5px;height:54px;background:#d9d9d9;"></div>
<div style="position:absolute;left:1897.2px;top:722px;width:1.5px;height:54px;background:#d9d9d9;"></div>
<div style="position:absolute;left:2075.2px;top:722px;width:1.5px;height:54px;background:#d9d9d9;"></div>
<div style="position:absolute;left:2254.5px;top:722px;width:1.5px;height:54px;background:#d9d9d9;"></div>
<div style="position:absolute;left:2434.5px;top:722px;width:1.5px;height:54px;background:#d9d9d9;"></div>
<div style="position:absolute;left:240px;top:774.5px;width:2303px;height:2.0px;background:#c6c6c6;"></div>
<div style="position:absolute;left:1482.4px;top:772.5px;width:415.29999999999995px;height:4.0px;background:#107c41;"></div>
<div style="position:absolute;left:172px;top:776px;width:67.5px;height:910px;background:#f0f0f0;"></div>
<div style="position:absolute;left:239px;top:776px;width:1.5px;height:910px;background:#c6c6c6;"></div>
<div style="position:absolute;left:240.5px;top:776.5px;width:2302.5px;height:909.5px;background:#fff;"></div>
<div style="position:absolute;left:172px;top:1249px;width:67px;height:58px;background:#e1e1e1;"></div>
<div style="position:absolute;left:236px;top:1249px;width:4px;height:58px;background:#107c41;"></div>
<div class="t" style="left:163px;width:80px;text-align:center;top:1143.2px;font-size:37px;color:#262626;">1</div>
<div class="t" style="left:163px;width:80px;text-align:center;top:1200.5px;font-size:37px;color:#262626;">2</div>
<div class="t" style="left:163px;width:80px;text-align:center;top:1259.0px;font-size:37px;color:#107c41;">3</div>
<div class="t" style="left:163px;width:80px;text-align:center;top:1317.2px;font-size:37px;color:#262626;">4</div>
<div class="t" style="left:163px;width:80px;text-align:center;top:1375.9px;font-size:37px;color:#262626;">5</div>
<div class="t" style="left:163px;width:80px;text-align:center;top:1434.5px;font-size:37px;color:#262626;">6</div>
<div class="t" style="left:163px;width:80px;text-align:center;top:1493.0px;font-size:37px;color:#262626;">7</div>
<div class="t" style="left:163px;width:80px;text-align:center;top:1551.7px;font-size:37px;color:#262626;">8</div>
<div class="t" style="left:163px;width:80px;text-align:center;top:1610.2px;font-size:37px;color:#262626;">9</div>
<div class="t" style="left:163px;width:80px;text-align:center;top:1668.8px;font-size:37px;color:#262626;">10</div>
<div style="position:absolute;left:172px;top:1189.5px;width:67px;height:1.0px;background:#dadada;"></div>
<div style="position:absolute;left:240.5px;top:1189.5px;width:2302.5px;height:1.5px;background:#d9d9d9;"></div>
<div style="position:absolute;left:172px;top:1248.5px;width:67px;height:1.0px;background:#dadada;"></div>
<div style="position:absolute;left:240.5px;top:1248.5px;width:2302.5px;height:1.5px;background:#d9d9d9;"></div>
<div style="position:absolute;left:172px;top:1306.5px;width:67px;height:1.0px;background:#dadada;"></div>
<div style="position:absolute;left:240.5px;top:1306.5px;width:2302.5px;height:1.5px;background:#d9d9d9;"></div>
<div style="position:absolute;left:172px;top:1365.1px;width:67px;height:1.0px;background:#dadada;"></div>
<div style="position:absolute;left:240.5px;top:1365.1px;width:2302.5px;height:1.5px;background:#d9d9d9;"></div>
<div style="position:absolute;left:172px;top:1423.7px;width:67px;height:1.0px;background:#dadada;"></div>
<div style="position:absolute;left:240.5px;top:1423.7px;width:2302.5px;height:1.5px;background:#d9d9d9;"></div>
<div style="position:absolute;left:172px;top:1482.3px;width:67px;height:1.0px;background:#dadada;"></div>
<div style="position:absolute;left:240.5px;top:1482.3px;width:2302.5px;height:1.5px;background:#d9d9d9;"></div>
<div style="position:absolute;left:172px;top:1540.9px;width:67px;height:1.0px;background:#dadada;"></div>
<div style="position:absolute;left:240.5px;top:1540.9px;width:2302.5px;height:1.5px;background:#d9d9d9;"></div>
<div style="position:absolute;left:172px;top:1599.5px;width:67px;height:1.0px;background:#dadada;"></div>
<div style="position:absolute;left:240.5px;top:1599.5px;width:2302.5px;height:1.5px;background:#d9d9d9;"></div>
<div style="position:absolute;left:172px;top:1658.1px;width:67px;height:1.0px;background:#dadada;"></div>
<div style="position:absolute;left:240.5px;top:1658.1px;width:2302.5px;height:1.5px;background:#d9d9d9;"></div>
<div style="position:absolute;left:654.1px;top:1190px;width:1.5px;height:496px;background:#d9d9d9;"></div>
<div style="position:absolute;left:1068.3px;top:1190px;width:1.5px;height:496px;background:#d9d9d9;"></div>
<div style="position:absolute;left:1481.9px;top:1190px;width:1.5px;height:496px;background:#d9d9d9;"></div>
<div style="position:absolute;left:1897.2px;top:1190px;width:1.5px;height:496px;background:#d9d9d9;"></div>
<div style="position:absolute;left:2075.2px;top:1190px;width:1.5px;height:496px;background:#d9d9d9;"></div>
<div style="position:absolute;left:2254.5px;top:1190px;width:1.5px;height:496px;background:#d9d9d9;"></div>
<div style="position:absolute;left:2434.5px;top:1190px;width:1.5px;height:496px;background:#d9d9d9;"></div>
<div style="position:absolute;left:240.5px;top:1189.5px;width:1241.9px;height:60.0px;background:#ffff00;"></div>
<div style="position:absolute;left:1482px;top:1190px;width:415.70000000000005px;height:58px;background:#4560bd;"></div>
<div class="t" style="left:343.8px;top:1198.7px;font-size:41px;font-weight:bold;color:#000;">지원자번호</div>
<div class="t" style="left:820.3px;top:1198.7px;font-size:41px;font-weight:bold;color:#000;">성명</div>
<div class="t" style="left:1124.6px;top:1198.7px;font-size:41.4px;font-weight:bold;color:#000;">파일업로드 여부</div>
<div class="t" style="left:1581.1px;top:1198.1px;font-size:41.7px;font-weight:bold;color:#fff;">매핑 파일명</div>
<div style="position:absolute;left:610px;top:1203px;width:41px;height:40px;border:1px solid #b4b7c0;background:linear-gradient(#ffffff,#eceff4);box-sizing:content-box;"></div>
<svg style="position:absolute;left:621.0px;top:1219px" width="20" height="12" viewBox="0 0 20 12" fill="none"><path d="M1 1 H19 L10 11 Z" fill="#5a5a5a"/></svg>
<div style="position:absolute;left:1024.4px;top:1203px;width:41px;height:40px;border:1px solid #b4b7c0;background:linear-gradient(#ffffff,#eceff4);box-sizing:content-box;"></div>
<svg style="position:absolute;left:1035.4px;top:1219px" width="20" height="12" viewBox="0 0 20 12" fill="none"><path d="M1 1 H19 L10 11 Z" fill="#5a5a5a"/></svg>
<div style="position:absolute;left:1441.5px;top:1203px;width:38px;height:40px;border:1px solid #b4b7c0;background:linear-gradient(#ffffff,#eceff4);box-sizing:content-box;"></div>
<svg style="position:absolute;left:1451.0px;top:1219px" width="20" height="12" viewBox="0 0 20 12" fill="none"><path d="M1 1 H19 L10 11 Z" fill="#5a5a5a"/></svg>
<div style="position:absolute;left:1852.7px;top:1203px;width:41px;height:40px;border:1px solid #b4b7c0;background:linear-gradient(#ffffff,#eceff4);box-sizing:content-box;"></div>
<svg style="position:absolute;left:1863.7px;top:1219px" width="20" height="12" viewBox="0 0 20 12" fill="none"><path d="M1 1 H19 L10 11 Z" fill="#5a5a5a"/></svg>
<div class="t" style="left:245.9px;top:1259.5px;font-size:36.4px;font-weight:normal;color:#000;">AP20240812157461</div>
<div class="t" style="left:662.9px;top:1258.2px;font-size:38px;font-weight:normal;color:#000;">김지원</div>
<div class="t" style="left:1076.4px;top:1259.5px;font-size:36.4px;font-weight:normal;color:#000;transform:scaleX(1.12);transform-origin:left;">N</div>
<div class="t" style="left:1488.8px;top:1259.1px;font-size:39.3px;font-weight:normal;color:#000;">kjw_portfolio</div>
<div class="t" style="left:248.8px;top:825.3px;font-size:41px;font-weight:bold;color:#000;letter-spacing:0.47px;">1. 각 지원자의 외부자료 연동 현황을 나타냅니다.</div>
<div class="t" style="left:248.8px;top:878.6px;font-size:41px;font-weight:bold;color:#000;letter-spacing:0.47px;">2. 노란색 영역은 지원자 정보입니다. 수정하지 말아주세요</div>
<div class="t" style="left:248.8px;top:931.9px;font-size:41px;font-weight:bold;color:#000;letter-spacing:0.47px;">3. 파란색 영역의 매핑파일명을 입력해서 엑셀파일 업로드 해주세요</div>
<div class="t" style="left:248.8px;top:985.2px;font-size:41px;font-weight:bold;color:#000;letter-spacing:0.47px;">4. 매핑파일명은 지원자별 고유한 명칭이어야 하며, 중복되면 안됩니다.</div>
<div class="t" style="left:248.8px;top:1038.5px;font-size:41px;font-weight:bold;color:#000;letter-spacing:0.47px;">5. 등록한 매핑파일명과 동일한 외부연동 파일을 첨부해주세요(다를 경우 첨부 불가합니다.)</div>
<div class="t" style="left:248.8px;top:1091.8px;font-size:41px;font-weight:bold;color:#000;letter-spacing:0.47px;">6. 매핑파일명 수정해서 재 업로드 시 해당 지원자의 외부연동 파일은 삭제됩니다.(수정된 파일명으로 재업로드 필요)</div>
<div style="position:absolute;left:1480px;top:1247px;width:418px;height:62px;border:3px solid #107c41;box-sizing:border-box;"></div>
<div style="position:absolute;left:1890.5px;top:1302px;width:9.5px;height:10px;background:#107c41;border:1.5px solid #fff;"></div>
<div style="position:absolute;left:1436.5px;top:1162.3px;width:505px;height:183.2px;border:5.5px solid #0a6cff;box-sizing:border-box;background:rgba(38,113,230,0.12);"></div>
<div style="position:absolute;left:1380px;top:1132.5px;width:75px;height:75px;border-radius:50%;background:#0a6cff;"></div>
<div class="t" style="left:1380px;width:75px;text-align:center;top:1147px;font-size:44px;font-weight:bold;color:#fff;">5</div>
<div style="position:absolute;left:172px;top:1686px;width:2417px;height:81px;background:#e3e3e3;"></div>
<div style="position:absolute;left:452px;top:1686px;width:188.5px;height:72px;background:#fff;border-radius:0 0 14px 14px;"></div>
<div style="position:absolute;left:438px;top:1686px;width:14px;height:14px;background:radial-gradient(circle at 0 100%, #e3e3e3 14px, #fff 14.5px);"></div>
<div style="position:absolute;left:640.5px;top:1686px;width:14px;height:14px;background:radial-gradient(circle at 100% 100%, #e3e3e3 14px, #fff 14.5px);"></div>
<div class="t" style="left:478.9px;top:1699.3px;font-size:36.5px;font-weight:normal;color:#262626;">외부연동</div>
<div style="position:absolute;left:474px;top:1746.4px;width:145px;height:4.599999999999909px;background:#107c41;border-radius:2px;"></div>
<svg style="position:absolute;left:224px;top:1710px" width="22" height="30" viewBox="0 0 22 30" fill="none"><path d="M18 2 L4 15 L18 28" stroke="#888" stroke-width="2.6" fill="none"/></svg>
<svg style="position:absolute;left:310px;top:1710px" width="22" height="30" viewBox="0 0 22 30" fill="none"><path d="M4 2 L18 15 L4 28" stroke="#888" stroke-width="2.6" fill="none"/></svg>
<div style="position:absolute;left:650px;top:1705px;width:1.5px;height:46px;background:#c8c8c8;"></div>
<svg style="position:absolute;left:758px;top:1709px" width="33" height="33" viewBox="0 0 33 33" fill="none"><path d="M16.5 2 V31 M2 16.5 H31" stroke="#333" stroke-width="3"/></svg>
<div style="position:absolute;left:1630.5px;top:1715.5px;width:5.0px;height:5.0px;background:#333;border-radius:50%;"></div>
<div style="position:absolute;left:1630.5px;top:1725.5px;width:5.0px;height:5.0px;background:#333;border-radius:50%;"></div>
<div style="position:absolute;left:1630.5px;top:1735.5px;width:5.0px;height:5.0px;background:#333;border-radius:50%;"></div>
<div style="position:absolute;left:1675px;top:1703.5px;width:871px;height:43.5px;background:#f5f5f5;border-radius:22px;"></div>
<svg style="position:absolute;left:1686px;top:1712px" width="22" height="27" viewBox="0 0 22 27" fill="none"><path d="M19 2 V25 L3 13.5 Z" fill="#6e6e6e" stroke="#6e6e6e" stroke-width="2" stroke-linejoin="round"/></svg>
<div style="position:absolute;left:1720px;top:1715.4px;width:456.6px;height:20.3px;background:#707070;border-radius:11px;"></div>
<svg style="position:absolute;left:2515px;top:1712px" width="22" height="27" viewBox="0 0 22 27" fill="none"><path d="M3 2 V25 L19 13.5 Z" fill="#6e6e6e" stroke="#6e6e6e" stroke-width="2" stroke-linejoin="round"/></svg>
<div style="position:absolute;left:2548.5px;top:718.5px;width:39px;height:972px;background:#f5f5f5;border-radius:20px;"></div>
<svg style="position:absolute;left:2558px;top:731px" width="24" height="19" viewBox="0 0 24 19" fill="none"><path d="M12 2 L22 17 H2 Z" fill="#6e6e6e" stroke="#6e6e6e" stroke-width="2" stroke-linejoin="round"/></svg>
<div style="position:absolute;left:2560px;top:763.5px;width:20.5px;height:490.5px;background:#707070;border-radius:11px;"></div>
<svg style="position:absolute;left:2558px;top:1659px" width="24" height="19" viewBox="0 0 24 19" fill="none"><path d="M12 17 L22 2 H2 Z" fill="#6e6e6e" stroke="#6e6e6e" stroke-width="2" stroke-linejoin="round"/></svg>
<div style="position:absolute;left:172px;top:1767px;width:2417px;height:56px;background:#f4f4f4;border-radius:0 0 20px 20px;"></div>
<div class="t" style="left:196.8px;top:1781.8px;font-size:32px;font-weight:normal;color:#303030;">준비</div>
<svg style="position:absolute;left:302px;top:1777px" width="44" height="42" viewBox="0 0 44 42" fill="none">
<circle cx="19.4" cy="8.9" r="4.6" stroke="#333" stroke-width="2.6"/>
<path d="M13.5 17.5 C8 15.5 3.5 14.5 4.5 11 C5.5 8 9 9 12 10 C15 11 17 12.5 19.5 12.5 C22 12.5 24 11 27 10 C30 9 33.5 8 34.5 11 C35.5 14.5 31 15.5 26 17.5 C25 18.5 25 21 25 24.5" stroke="#333" stroke-width="2.6" fill="none" stroke-linecap="round" stroke-linejoin="round"/>
<path d="M13.5 17.5 C14.5 19.5 14 24 13 28 C12 32 9.5 35 10.5 36.5 C11.5 37.5 13 37.5 14.5 37.5" stroke="#333" stroke-width="2.6" fill="none" stroke-linecap="round"/>
<path d="M20.5 30 L28 37 L40 25" stroke="#333" stroke-width="2.8" fill="none" stroke-linecap="round" stroke-linejoin="round"/>
</svg>
<div class="t" style="left:352.7px;top:1781.9px;font-size:31.4px;font-weight:normal;color:#303030;">접근성: 계속 진행 가능</div>
<svg style="position:absolute;left:1469px;top:1779px" width="42" height="40" viewBox="0 0 42 40" fill="none">
<path d="M15 26 H3 V4 H39 V15" stroke="#333" stroke-width="2.6" fill="none"/>
<path d="M28.0 15.5 L31.4 19.6 L36.7 20.5 L34.8 25.5 L36.7 30.5 L31.4 31.4 L28.0 35.5 L24.6 31.4 L19.3 30.5 L21.2 25.5 L19.3 20.5 L24.6 19.6 Z" fill="#f4f4f4" stroke="#333" stroke-width="2.4" stroke-linejoin="round"/>
<circle cx="28" cy="25.5" r="3" fill="#333"/>
</svg>
<div class="t" style="left:1518.1px;top:1779.6px;font-size:31.5px;font-weight:normal;color:#303030;">디스플레이 설정</div>
<div style="position:absolute;left:1790.8px;top:1770px;width:102.20000000000005px;height:52px;background:#e1e1e1;"></div>
<svg style="position:absolute;left:1822px;top:1778px" width="38" height="38" viewBox="0 0 38 38" fill="none"><rect x="3" y="3" width="32" height="32" stroke="#333" stroke-width="3"/><path d="M13.7 3 V35 M24.3 3 V35 M3 13.7 H35 M3 24.3 H35" stroke="#333" stroke-width="3"/></svg>
<svg style="position:absolute;left:1926px;top:1778px" width="40" height="38" viewBox="0 0 40 38" fill="none"><rect x="2" y="2" width="36" height="34" stroke="#333" stroke-width="3"/><rect x="9" y="8" width="22" height="22" stroke="#333" stroke-width="2.4"/><path d="M13 15 H27 M13 20 H27 M13 25 H27" stroke="#333" stroke-width="2"/></svg>
<svg style="position:absolute;left:2029px;top:1778px" width="40" height="38" viewBox="0 0 40 38" fill="none"><rect x="2" y="2" width="36" height="34" stroke="#333" stroke-width="3"/><path d="M2 19 H23 V2 M10 2 V19 M16 2 V19" stroke="#333" stroke-width="2.6" fill="none"/></svg>
<div style="position:absolute;left:2114px;top:1795.5px;width:21px;height:3.0px;background:#444;"></div>
<div style="position:absolute;left:2149.4px;top:1795.7px;width:255.0999999999999px;height:3.0px;background:#444;"></div>
<div style="position:absolute;left:2269.7px;top:1782px;width:14.300000000000182px;height:30px;background:#555;"></div>
<svg style="position:absolute;left:2416px;top:1786px" width="24" height="24" viewBox="0 0 24 24" fill="none"><path d="M12 1 V23 M1 12 H23" stroke="#444" stroke-width="2.4"/></svg>
<div class="t" style="left:2472.1px;top:1784.9px;font-size:30px;font-weight:normal;color:#555;">100%</div>
</div></body></html>
